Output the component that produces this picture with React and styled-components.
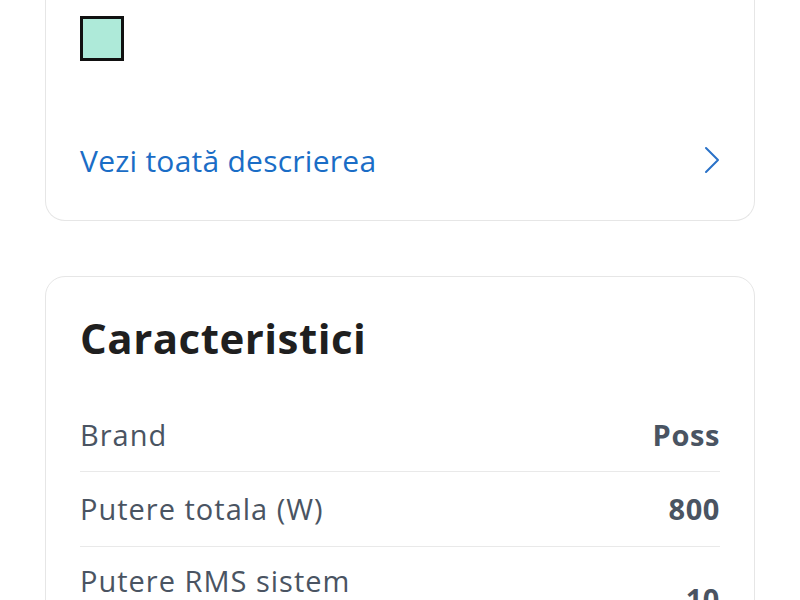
import React from "react";
import styled, { createGlobalStyle } from "styled-components";

const Global = createGlobalStyle`
  html, body { margin: 0; padding: 0; background: #ffffff; }
  body { font-family: "Open Sans", "Noto Sans", sans-serif; }
  * { box-sizing: border-box; }
`;

const Page = styled.div`
  display: flex;
  flex-direction: column;
  gap: 55px;
  padding: 0 45px;
`;

const Card = styled.section`
  background: #fff;
  border: 1.5px solid #e6e6e6;
  border-radius: 20px;
  padding: 35px 34px 35px 34px;
  ${(p) =>
    p.$clipped &&
    `
    border-top: none;
    border-top-left-radius: 0;
    border-top-right-radius: 0;
    padding-top: 16px;
  `}
`;

const Swatch = styled.div`
  width: 44px;
  height: 45px;
  background: ${(p) => p.$color};
  border: 3px solid #111;
`;

const LinkRow = styled.a`
  margin-top: 74px;
  height: 50px;
  display: flex;
  align-items: center;
  justify-content: space-between;
  color: #1a6dc6;
  font-size: 30px;
  letter-spacing: 0.25px;
  text-decoration: none;
  cursor: pointer;
`;

const Heading = styled.h2`
  margin: 0 0 33px;
  font-size: 42px;
  line-height: 52px;
  font-weight: 700;
  color: #1f1f1f;
  letter-spacing: 0.5px;
`;

const Row = styled.div`
  display: flex;
  align-items: center;
  justify-content: space-between;
  gap: 24px;
  padding: ${(p) => (p.$first ? "17px 0 15px" : "16px 0")};
  border-bottom: ${(p) => (p.$last ? "none" : "1.5px solid #e9e9e9")};
  font-size: 29px;
  letter-spacing: 1px;
  line-height: 42px;
  color: #4a5462;
`;

const Label = styled.span`
  max-width: 45%;
  line-height: 36px;
`;

const Value = styled.span`
  font-weight: 700;
  text-align: right;
  letter-spacing: 0.6px;
`;

const Chevron = () => (
  <svg width="16" height="28" viewBox="0 0 16 28" fill="none">
    <polyline
      points="2,2 14,14 2,26"
      stroke="#2a72c8"
      strokeWidth="2"
      strokeLinecap="round"
      strokeLinejoin="round"
    />
  </svg>
);

const specs = [
  { label: "Brand", value: "Poss" },
  { label: "Putere totala (W)", value: "800" },
  { label: "Putere RMS sistem (W)", value: "10" },
];

export default function App() {
  return (
    <>
      <Global />
      <Page>
        <Card $clipped>
          <Swatch $color="#aeead9" />
          <LinkRow>
            <span>Vezi toată descrierea</span>
            <Chevron />
          </LinkRow>
        </Card>
        <Card>
          <Heading>Caracteristici</Heading>
          {specs.map((s, i) => (
            <Row key={s.label} $first={i === 0} $last={i === specs.length - 1}>
              <Label>{s.label}</Label>
              <Value>{s.value}</Value>
            </Row>
          ))}
        </Card>
      </Page>
    </>
  );
}
